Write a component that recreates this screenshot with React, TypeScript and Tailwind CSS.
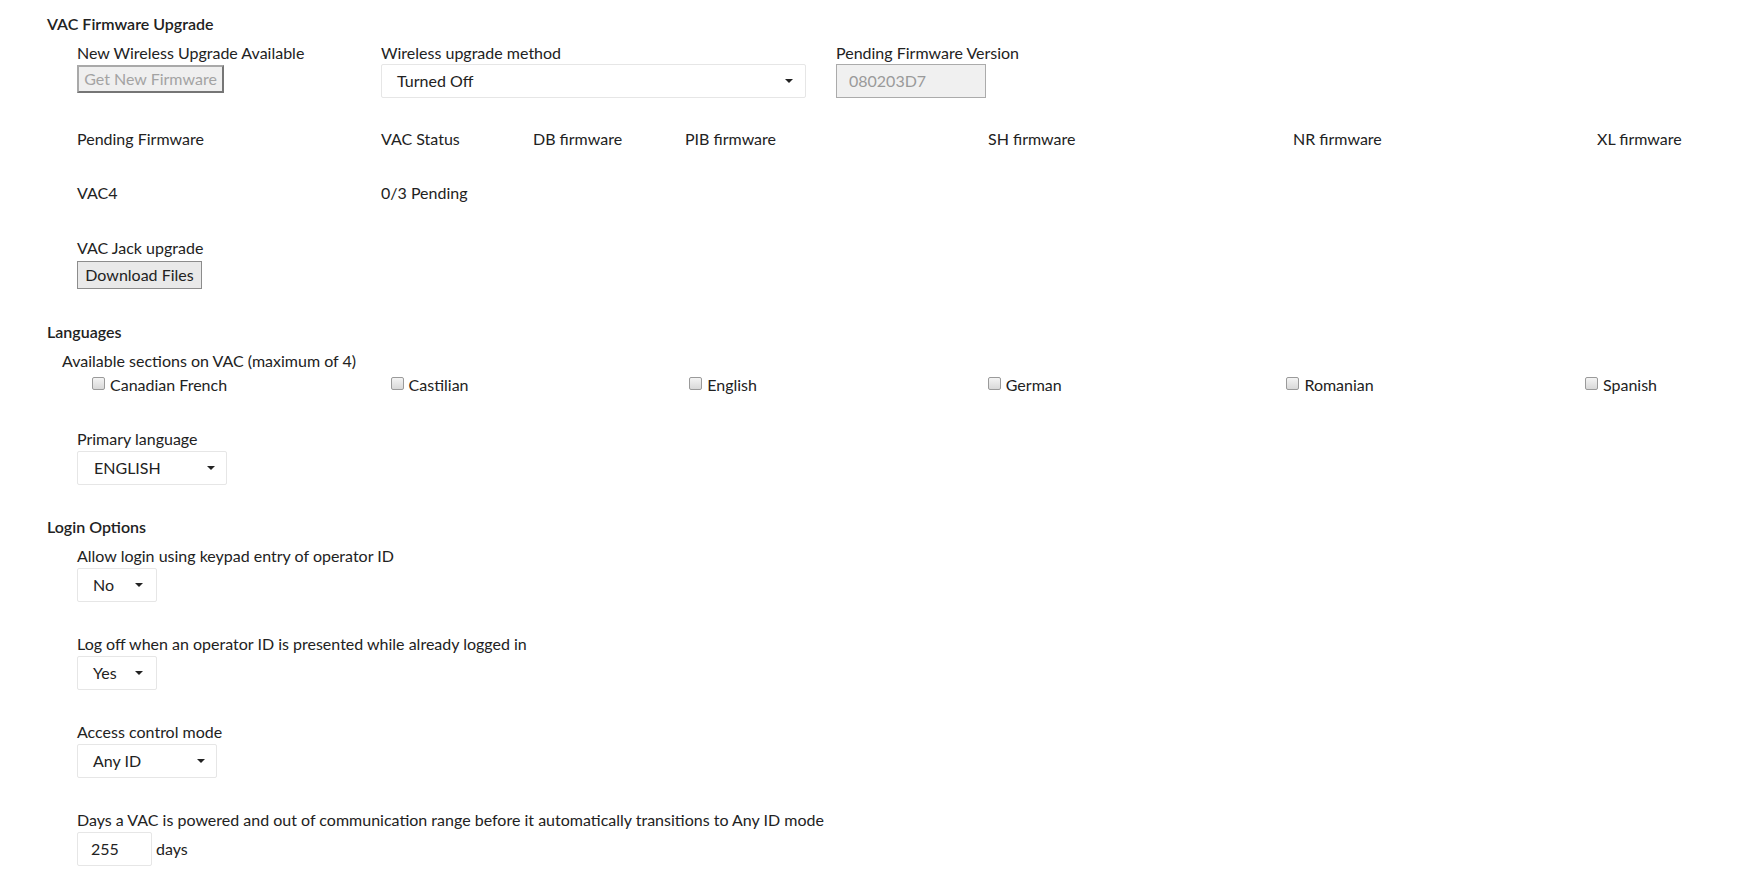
import React from "react";

const Caret = () => (
  <svg width="8" height="4" viewBox="0 0 8 4" className="shrink-0">
    <path d="M0 0 L8 0 L4 4 Z" fill="#222" />
  </svg>
);

function Select({ value, w, pl = "pl-[16px]", pr = "pr-[11px]" }: { value: string; w: string; pl?: string; pr?: string }) {
  return (
    <div className={`${w} h-[34px] flex items-center justify-between border border-[#e6e6e6] rounded-[2px] bg-white ${pl} ${pr}`}>
      <span>{value}</span>
      <Caret />
    </div>
  );
}

function Check({ label }: { label: string }) {
  return (
    <div className="w-[298.6px] shrink-0 flex items-center pl-[15px] h-5">
      <span className="w-[13px] h-[13px] rounded-[2px] border border-[#9a9a9a] bg-gradient-to-b from-[#f4f4f4] to-[#d8d8d8] mr-[5px] mt-[-4px]" />
      <span>{label}</span>
    </div>
  );
}

export default function App() {
  return (
    <div
      className="min-h-screen bg-white text-[#222] text-[16px] leading-5 pl-[47px] pt-[14px] overflow-hidden"
      style={{ fontFamily: "Lato, 'Open Sans', sans-serif" }}
    >
      {/* VAC Firmware Upgrade */}
      <div className="h-5 font-semibold">VAC Firmware Upgrade</div>
      <div className="pl-[30px]">
        <div className="flex mt-[9px]">
          <div className="w-[304px] shrink-0">
            <div className="h-5">New Wireless Upgrade Available</div>
            <button className="mt-[2px] w-[147px] h-[28px] border-2 border-[#767676] border-t-[#a9a9a9] border-l-[#a9a9a9] bg-[#efefef] text-[#a3a3a3] text-[16px] leading-none">
              Get New Firmware
            </button>
          </div>
          <div className="w-[455px] shrink-0">
            <div className="h-5">Wireless upgrade method</div>
            <div className="mt-[1px]">
              <Select value="Turned Off" w="w-[425px]" pl="pl-[15px]" pr="pr-[12px]" />
            </div>
          </div>
          <div className="shrink-0">
            <div className="h-5">Pending Firmware Version</div>
            <div className="mt-[1px] w-[150px] h-[34px] border border-[#ababab] bg-[#f0f0f0] text-[#9a9a9a] flex items-center pl-[12px]">
              080203D7
            </div>
          </div>
        </div>

        <div className="flex mt-[31px] h-5 whitespace-nowrap">
          <div className="w-[304px] shrink-0">Pending Firmware</div>
          <div className="w-[152px] shrink-0">VAC Status</div>
          <div className="w-[152px] shrink-0">DB firmware</div>
          <div className="w-[303px] shrink-0">PIB firmware</div>
          <div className="w-[305px] shrink-0">SH firmware</div>
          <div className="w-[304px] shrink-0">NR firmware</div>
          <div className="shrink-0">XL firmware</div>
        </div>

        <div className="flex mt-[34px] h-5">
          <div className="w-[304px] shrink-0">VAC4</div>
          <div className="shrink-0">0/3 Pending</div>
        </div>

        <div className="mt-[35px] h-5">VAC Jack upgrade</div>
        <button className="mt-[3px] w-[125px] h-[28px] border border-[#8c8c8c] bg-[#e9e9e9] text-[#222] text-[16px] leading-none">
          Download Files
        </button>
      </div>

      {/* Languages */}
      <div className="mt-[33px] h-5 font-semibold">Languages</div>
      <div className="mt-[9px] pl-[15px] h-5">Available sections on VAC (maximum of 4)</div>
      <div className="mt-[4px] pl-[30px] flex whitespace-nowrap">
        <Check label="Canadian French" />
        <Check label="Castilian" />
        <Check label="English" />
        <Check label="German" />
        <Check label="Romanian" />
        <Check label="Spanish" />
      </div>
      <div className="pl-[30px]">
        <div className="mt-[34px] h-5">Primary language</div>
        <div className="mt-[2px]">
          <Select value="ENGLISH" w="w-[150px]" pl="pl-[16px]" pr="pr-[11px]" />
        </div>
      </div>

      {/* Login Options */}
      <div className="mt-[32px] h-5 font-semibold">Login Options</div>
      <div className="pl-[30px]">
        <div className="mt-[9px] h-5">Allow login using keypad entry of operator ID</div>
        <div className="mt-[2px]">
          <Select value="No" w="w-[80px]" pl="pl-[15px]" pr="pr-[13px]" />
        </div>
        <div className="mt-[32px] h-5">Log off when an operator ID is presented while already logged in</div>
        <div className="mt-[2px]">
          <Select value="Yes" w="w-[80px]" pl="pl-[15px]" pr="pr-[13px]" />
        </div>
        <div className="mt-[32px] h-5">Access control mode</div>
        <div className="mt-[2px]">
          <Select value="Any ID" w="w-[140px]" pl="pl-[15px]" pr="pr-[11px]" />
        </div>
        <div className="mt-[32px] h-5">
          Days a VAC is powered and out of communication range before it automatically transitions to Any ID mode
        </div>
        <div className="mt-[2px] flex items-center">
          <div className="w-[75px] h-[34px] border border-[#e6e6e6] rounded-[2px] flex items-center pl-[13px]">255</div>
          <span className="ml-[4px]">days</span>
        </div>
      </div>
    </div>
  );
}
